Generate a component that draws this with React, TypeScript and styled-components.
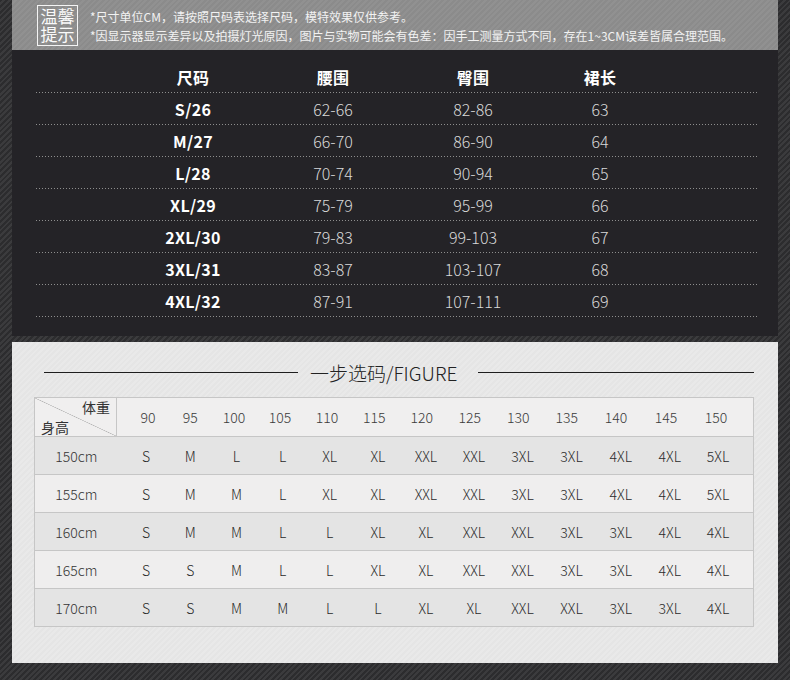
import * as React from 'react';
import styled, { createGlobalStyle } from 'styled-components';

const GlobalStyle = createGlobalStyle`
    html, body {
        margin: 0;
        padding: 0;
    }
    body {
        background: repeating-linear-gradient(135deg, #2c2c2e 0px, #2c2c2e 2px, #3b3b3d 2px, #3b3b3d 4px);
        font-family: "Noto Sans CJK SC", "Noto Sans", sans-serif;
    }
`;

const Page = styled('div')`
    width: 790px;
    height: 680px;
    box-sizing: border-box;
    padding: 0 12px 0 12px;
    display: flex;
    flex-direction: column;
    overflow: hidden;
`;

const NoticeBar = styled('div')`
    height: 50px;
    display: flex;
    align-items: center;
    gap: 12px;
    padding-left: 25px;
    background: repeating-linear-gradient(135deg, #8b8b8b 0px, #8b8b8b 2px, #919191 2px, #919191 4px);
`;

const NoticeTag = styled('div')`
    width: 41px;
    height: 41px;
    box-sizing: border-box;
    border: 1.5px solid #f4f4f4;
    display: flex;
    align-items: center;
    justify-content: center;
`;

const NoticeTagText = styled('span')`
    width: 34px;
    color: #fafafa;
    font-size: 17px;
    line-height: 18px;
    text-align: center;
    word-break: break-all;
`;

const NoticeLines = styled('div')`
    display: flex;
    flex-direction: column;
    gap: 2px;
    color: #f2f2f2;
    font-size: 12px;
    line-height: 17px;
    margin-top: 1px;
    white-space: nowrap;
`;

const DarkPanel = styled('div')`
    height: 286px;
    box-sizing: border-box;
    padding: 11px 21px 0 24px;
    background: #242327;
`;

const SizeRow = styled('div')<{ head?: boolean }>`
    display: grid;
    grid-template-columns: 140px 140px 140px 114px;
    padding-left: 87px;
    height: 32px;
    align-items: center;
    background: linear-gradient(to right, #8e8e8e 1px, transparent 1px) left bottom / 3px 1px repeat-x;
    padding-bottom: ${props => props.head ? '0' : '1px'};
    box-sizing: border-box;
`;

const SizeCell = styled('div')<{ strong?: boolean }>`
    text-align: center;
    font-size: 16px;
    font-weight: ${props => props.strong ? 700 : 300};
    color: ${props => props.strong ? '#ffffff' : '#d9d9d9'};
    letter-spacing: ${props => props.strong ? '0.3px' : '0'};
`;

const Gap = styled('div')`
    height: 6px;
`;

const LightPanel = styled('div')`
    height: 321px;
    box-sizing: border-box;
    padding: 17px 24px 0 22px;
    background: repeating-linear-gradient(135deg, #e5e5e5 0px, #e5e5e5 2px, #e9e9e9 2px, #e9e9e9 4px);
    display: flex;
    flex-direction: column;
`;

const TitleRow = styled('div')`
    display: flex;
    align-items: center;
    height: 26px;
    padding-left: 10px;
    margin-bottom: 12px;
`;

const Rule = styled('div')<{ w?: number }>`
    height: 1px;
    background: #1e1e1e;
    width: ${props => props.w ? props.w + 'px' : 'auto'};
    flex: ${props => props.w ? '0 0 auto' : '1'};
`;

const Title = styled('div')`
    font-size: 19px;
    font-weight: 300;
    color: #222;
    margin: 0 21px 0 12px;
    white-space: nowrap;
`;

const FitTable = styled('div')`
    border: 1px solid #c6c6c6;
    display: flex;
    flex-direction: column;
`;

// header columns and data columns sit a little apart in the original artwork
const headCols = '82px 10px 42px 42.5px 45px 47px 47px 47.5px 47.5px 48.5px 48.5px 48.5px 50px 50px 50px 1fr';
const bodyCols = '89.75px 42.5px 46px 46.5px 46px 48px 48.25px 47.75px 48.25px 49px 49px 49.5px 48.5px 48px 1fr';

const FitRow = styled('div')<{ tone: 'head' | 'dark' | 'light' }>`
    display: grid;
    grid-template-columns: ${props => props.tone === 'head' ? headCols : bodyCols};
    height: 38px;
    align-items: center;
    box-sizing: border-box;
    border-top: ${props => props.tone === 'head' ? 'none' : '1px solid #c6c6c6'};
    background: ${props => props.tone === 'head' ? '#f0efef' : props.tone === 'dark' ? '#e4e4e4' : '#efeeee'};
`;

const Corner = styled('div')`
    align-self: stretch;
    border-right: 1px solid #c6c6c6;
    display: flex;
    flex-direction: column;
    justify-content: space-between;
    padding: 1px 6px 0 6px;
    font-size: 14px;
    line-height: 17px;
    color: #333;
    background: linear-gradient(to top right, transparent calc(50% - 0.6px), #b5b5b5 50%, transparent calc(50% + 0.6px));
`;

const CornerLabel = styled('span')<{ end?: boolean }>`
    align-self: ${props => props.end ? 'flex-end' : 'flex-start'};
`;

const HeightLabel = styled('div')`
    text-align: center;
    font-size: 14px;
    font-weight: 300;
    color: #333;
    padding-right: 7px;
`;

const FitCell = styled('div')<{ head?: boolean }>`
    text-align: center;
    font-size: 14px;
    font-weight: 300;
    color: ${props => props.head ? '#3a3a3a' : '#2a2a2a'};
    white-space: nowrap;
`;

const sizes = [
    ['S/26', '62-66', '82-86', '63'],
    ['M/27', '66-70', '86-90', '64'],
    ['L/28', '70-74', '90-94', '65'],
    ['XL/29', '75-79', '95-99', '66'],
    ['2XL/30', '79-83', '99-103', '67'],
    ['3XL/31', '83-87', '103-107', '68'],
    ['4XL/32', '87-91', '107-111', '69'],
];

const weights = ['90', '95', '100', '105', '110', '115', '120', '125', '130', '135', '140', '145', '150'];

const fits: [string, string[]][] = [
    ['150cm', ['S', 'M', 'L', 'L', 'XL', 'XL', 'XXL', 'XXL', '3XL', '3XL', '4XL', '4XL', '5XL']],
    ['155cm', ['S', 'M', 'M', 'L', 'XL', 'XL', 'XXL', 'XXL', '3XL', '3XL', '4XL', '4XL', '5XL']],
    ['160cm', ['S', 'M', 'M', 'L', 'L', 'XL', 'XL', 'XXL', 'XXL', '3XL', '3XL', '4XL', '4XL']],
    ['165cm', ['S', 'S', 'M', 'L', 'L', 'XL', 'XL', 'XXL', 'XXL', '3XL', '3XL', '4XL', '4XL']],
    ['170cm', ['S', 'S', 'M', 'M', 'L', 'L', 'XL', 'XL', 'XXL', 'XXL', '3XL', '3XL', '4XL']],
];

export default function App() {
    return (
        <Page>
            <GlobalStyle />
            <NoticeBar>
                <NoticeTag>
                    <NoticeTagText>温馨提示</NoticeTagText>
                </NoticeTag>
                <NoticeLines>
                    <span>*尺寸单位CM，请按照尺码表选择尺码，模特效果仅供参考。</span>
                    <span>*因显示器显示差异以及拍摄灯光原因，图片与实物可能会有色差：因手工测量方式不同，存在1~3CM误差皆属合理范围。</span>
                </NoticeLines>
            </NoticeBar>

            <DarkPanel>
                <SizeRow head>
                    <SizeCell strong>尺码</SizeCell>
                    <SizeCell strong>腰围</SizeCell>
                    <SizeCell strong>臀围</SizeCell>
                    <SizeCell strong>裙长</SizeCell>
                </SizeRow>
                {sizes.map(row => (
                    <SizeRow key={row[0]}>
                        <SizeCell strong>{row[0]}</SizeCell>
                        <SizeCell>{row[1]}</SizeCell>
                        <SizeCell>{row[2]}</SizeCell>
                        <SizeCell>{row[3]}</SizeCell>
                    </SizeRow>
                ))}
            </DarkPanel>

            <Gap />

            <LightPanel>
                <TitleRow>
                    <Rule w={254} />
                    <Title>一步选码/FIGURE</Title>
                    <Rule />
                </TitleRow>
                <FitTable>
                    <FitRow tone="head">
                        <Corner>
                            <CornerLabel end>体重</CornerLabel>
                            <CornerLabel>身高</CornerLabel>
                        </Corner>
                        <span />
                        {weights.map(w => <FitCell head key={w}>{w}</FitCell>)}
                    </FitRow>
                    {fits.map(([h, list], i) => (
                        <FitRow key={h} tone={i % 2 === 0 ? 'dark' : 'light'}>
                            <HeightLabel>{h}</HeightLabel>
                            {list.map((s, j) => <FitCell key={j}>{s}</FitCell>)}
                        </FitRow>
                    ))}
                </FitTable>
            </LightPanel>
        </Page>
    );
}
